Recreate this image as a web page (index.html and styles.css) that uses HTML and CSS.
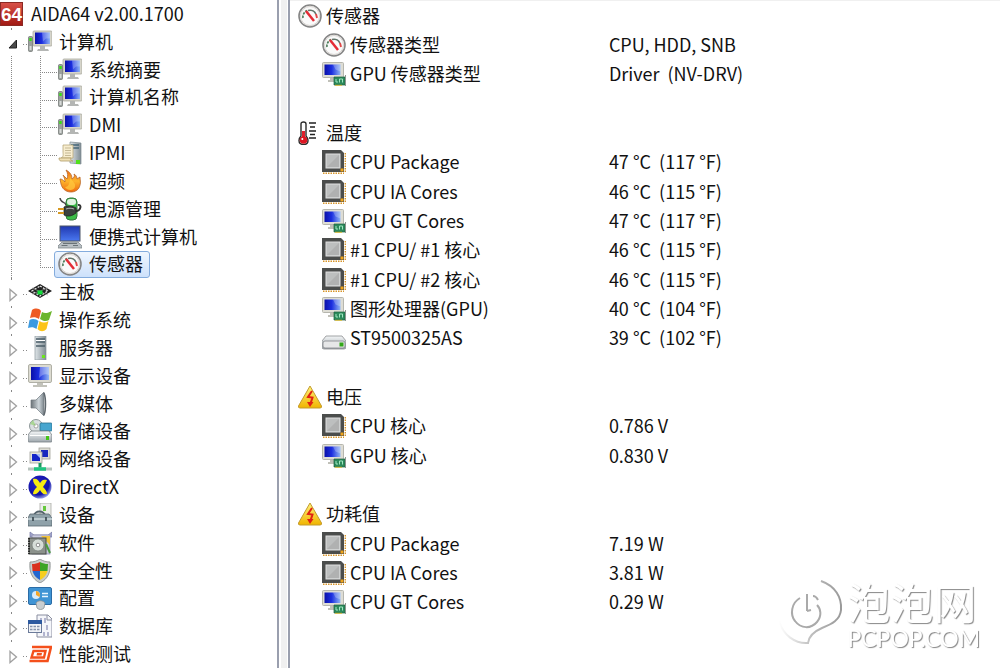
FILE: index.html
```html
<!DOCTYPE html>
<html lang="zh-CN">
<head>
    <meta charset="UTF-8">
    <meta name="viewport" content="width=device-width, initial-scale=1.0">
    <title>AIDA64</title>
    <link rel="stylesheet" href="styles.css">
</head>
<body>
    <svg class="sprite" aria-hidden="true">
        <defs>
            <linearGradient id="blue" x1="0" y1="0" x2="1" y2="0"><stop offset="0" stop-color="#0a10a8"/><stop offset=".45" stop-color="#1c2fe0"/><stop offset="1" stop-color="#8fb4f4"/></linearGradient>
            <linearGradient id="blue2" x1="0" y1="0" x2="0" y2="1"><stop offset="0" stop-color="#2038b0"/><stop offset="1" stop-color="#4a78f0"/></linearGradient>
            <linearGradient id="metal" x1="0" y1="0" x2="0" y2="1"><stop offset="0" stop-color="#f4f6f7"/><stop offset="1" stop-color="#9fa8ae"/></linearGradient>
            <linearGradient id="tower" x1="0" y1="0" x2="1" y2="0"><stop offset="0" stop-color="#dfe5e8"/><stop offset="1" stop-color="#7f8c93"/></linearGradient>
            <linearGradient id="fire" x1="0" y1="0" x2="0" y2="1"><stop offset="0" stop-color="#f26a10"/><stop offset=".5" stop-color="#fdb52c"/><stop offset="1" stop-color="#f06a10"/></linearGradient>
            <linearGradient id="gold" x1="0" y1="0" x2="0" y2="1"><stop offset="0" stop-color="#fff27a"/><stop offset="1" stop-color="#f0b400"/></linearGradient>
            <linearGradient id="red" x1="0" y1="0" x2="0" y2="1"><stop offset="0" stop-color="#d9534a"/><stop offset="1" stop-color="#a01812"/></linearGradient>
            <radialGradient id="orb" cx=".4" cy=".35" r=".7"><stop offset="0" stop-color="#2323c8"/><stop offset=".7" stop-color="#1414a8"/><stop offset="1" stop-color="#a8b4f0"/></radialGradient>
            <linearGradient id="cone" x1="0" y1="0" x2="1" y2="0"><stop offset="0" stop-color="#6b7378"/><stop offset=".6" stop-color="#cdd5da"/><stop offset="1" stop-color="#7c868c"/></linearGradient>
            <linearGradient id="fade" x1="0" y1="0" x2="1" y2="0"><stop offset="0" stop-color="#fff"/><stop offset=".55" stop-color="#bbb"/><stop offset="1" stop-color="#999"/></linearGradient>
        </defs>
        <symbol id="i-computer" viewBox="0 0 24 24">
            <rect x="5" y="1" width="19" height="15" rx="1" fill="#d6d5cb" stroke="#a9a99f" stroke-width=".8"/>
            <rect x="7" y="2.500" width="15" height="11.500" fill="url(#blue)"/>
            <path d="M14 2.500h8v6h-4l-3 3z" fill="#dfe9ff" opacity=".3"/>
            <path d="M12 16h5v3h3l1 2H9l1-2h2z" fill="#b4b6b4"/>
            <rect x=".5" y="6.500" width="4" height="15" rx="1" fill="#9ba09d" stroke="#6c706e" stroke-width=".7"/>
            <rect x="1.300" y="8" width="2.400" height="3" fill="#35e012"/>
            <rect x="1.500" y="16" width="2" height="4" fill="#d7dad8"/>
        </symbol>
        <symbol id="i-ipmi" viewBox="0 0 24 24">
            <path d="M12 1l11 1v21l-11-1z" fill="url(#tower)" stroke="#7d898f" stroke-width=".7"/>
            <path d="M13 4h8M13 7h8" stroke="#456577" stroke-width="1.500"/>
            <rect x="18" y="19" width="4" height="4" fill="#52e01c"/>
            <path d="M5 4h10v13H3c3-1 2-4 2-6z" fill="#f7edcf" stroke="#b9a878" stroke-width=".8"/>
            <path d="M1 17h12c-1 2 1 3 2 3H3c-1.500 0-2-1.500-2-3z" fill="#efe0b6" stroke="#b09c68" stroke-width=".8"/>
            <path d="M7 7h6M7 9.500h6M7 12h6M7 14.500h6" stroke="#b9ac88" stroke-width=".8"/>
        </symbol>
        <symbol id="i-fire" viewBox="0 0 24 24">
            <path d="M8 1c4 2 6 5 6 9 2-1 3-3 2-5 2 1 3 3 3 5l3-2c0 3 1 5 0 8-1 5-5 7-9 7-6 0-9-4-10-8l-1-5c2 0 3 1 5 3 0-3-1-5-2-7l4 4c1-3 1-6-1-9z" fill="url(#fire)" stroke="#b8662a" stroke-width=".8"/>
            <path d="M12 9c2 3 6 5 5 9-1 4-8 4-10 0 4 0 5-5 5-9z" fill="#ffc63c" opacity=".8"/>
        </symbol>
        <symbol id="i-power" viewBox="0 0 24 24">
            <rect x="8" y="1" width="11" height="22" rx="4" fill="#3bbd47" stroke="#37753e"/>
            <rect x="9" y="2" width="9" height="6" rx="3" fill="#dff3e0"/>
            <path d="M2 1c1 6 5 3 6 7" fill="none" stroke="#444" stroke-width="1.500"/>
            <path d="M18 14c5 0 6-7 2-6" fill="none" stroke="#333" stroke-width="2"/>
            <path d="M6 10c4-2 8-1 12 1v5c-4 3-8 4-12 2z" fill="#3c413e" stroke="#1f2220" stroke-width=".8"/>
            <path d="M8 12c3-1 5-1 8 0" fill="none" stroke="#b0b5b1"/>
            <path d="M0 12h6M0 16h6" stroke="#d79a22" stroke-width="1.800"/>
        </symbol>
        <symbol id="i-laptop" viewBox="0 0 24 24">
            <rect x="2" y="1" width="20" height="15" fill="url(#blue2)" stroke="#4d5668"/>
            <path d="M4 17h16l4 4v2H0v-2z" fill="#b9c0c4" stroke="#737b80" stroke-width=".7"/>
            <path d="M5 18.500h14M3.500 20.500h6M15 20.500h5" stroke="#6a7378"/>
        </symbol>
        <symbol id="i-gauge" viewBox="0 0 24 24">
            <circle cx="12" cy="12" r="11" fill="#fafafa" stroke="#858585" stroke-width="1.600"/>
            <circle cx="12" cy="12" r="9.500" fill="none" stroke="#d8d4d0"/>
            <path d="M5 14c-.5-3 1-6 4-7.500" fill="none" stroke="#4f7d5c" stroke-width="1.700" stroke-dasharray="2.500 1"/>
            <path d="M10 6.500c4-1 7 1 8 4" fill="none" stroke="#62756a" stroke-width="1.500"/>
            <path d="M18 10l1 4" stroke="#e04848" stroke-width="1.900"/>
            <path d="M8 7l8 10" stroke="#e42b35" stroke-width="2.500"/>
        </symbol>
        <symbol id="i-board" viewBox="0 0 24 24">
            <path d="M12 4l12 7-12 7L0 11z" fill="#222"/>
            <path d="M12 6l8 5-8 5-8-5z" fill="none" stroke="#ececec" stroke-width="1.200" stroke-dasharray="2 1.500"/>
            <path d="M4 8l16 7M20 8L4 14" stroke="#999" stroke-width=".7"/>
            <rect x="9.500" y="10.500" width="5" height="4" fill="#12e03a"/>
        </symbol>
        <symbol id="i-windows" viewBox="0 0 24 24">
            <path d="M4 2c3-2 7-2 9 1l-2 8c-3-2-6-2-9-1z" fill="#ee5a24"/>
            <path d="M14 4c3 2 6 1 10-1l-3 9c-3 2-6 1-9-1z" fill="#6cb52d"/>
            <path d="M1.500 12c3-2 7-1 9 1l-2 8c-3-2-5-2-8.500-1z" fill="#3b9ae0"/>
            <path d="M11.500 13c3 2 6 2 9 0l-2 8c-3 3-6 3-9 0z" fill="#fcc419"/>
        </symbol>
        <symbol id="i-server" viewBox="0 0 24 24">
            <path d="M7 0h11v24H7z" fill="url(#tower)" stroke="#8b969c" stroke-width=".7"/>
            <path d="M8 3h9M8 6h9M8 10h9" stroke="#4c5f69" stroke-width="1.300"/>
            <path d="M8 4.500h9" stroke="#fff"/>
            <rect x="14" y="19" width="3" height="3" fill="#6be81b"/>
        </symbol>
        <symbol id="i-display" viewBox="0 0 24 24">
            <rect x=".5" y=".5" width="23" height="18" rx="1.500" fill="#dcdbd1" stroke="#b0b0a6"/>
            <rect x="3" y="3" width="18" height="13" fill="url(#blue)"/>
            <path d="M12 3h9v8c-4-2-7 0-10 3z" fill="#fff" opacity=".3"/>
            <path d="M9 19h6v2h4v2H5v-2h4z" fill="#c2c2ba"/>
        </symbol>
        <symbol id="i-speaker" viewBox="0 0 24 24">
            <path d="M3 8h5l8-8v24l-8-8H3z" fill="url(#cone)" stroke="#707a80" stroke-width=".7"/>
            <path d="M16 1c2 5 2 17 0 22" fill="none" stroke="#5f686e" stroke-width="1.500"/>
        </symbol>
        <symbol id="i-storage" viewBox="0 0 24 24">
            <circle cx="8" cy="7" r="6.500" fill="#d9dfe0" stroke="#8e9799"/>
            <circle cx="8" cy="7" r="2" fill="#fff" stroke="#888" stroke-width=".7"/>
            <path d="M2 5l6 2-3-6z" fill="#88d060" opacity=".6"/>
            <rect x="12" y="4" width="12" height="8" rx="1" fill="#46a5cf" stroke="#28718f" stroke-width=".8"/>
            <path d="M3 12h18l3 4v6q0 1-1 1H1q-1 0-1-1v-6z" fill="url(#metal)" stroke="#777f84" stroke-width=".8"/>
            <path d="M2 16.500h20" stroke="#fff"/>
            <rect x="18" y="17" width="3" height="4" fill="#46c417"/>
        </symbol>
        <symbol id="i-network" viewBox="0 0 24 24">
            <rect x="11" y="1" width="11" height="11" fill="#dcdcd4" stroke="#a2a29a" stroke-width=".8"/>
            <rect x="13" y="3" width="7" height="7" fill="#1828c0"/>
            <rect x="2" y="5" width="12" height="11" fill="#e4e4dc" stroke="#a2a29a" stroke-width=".8"/>
            <rect x="4" y="7" width="8" height="7" fill="#1424c8"/>
            <path d="M8 7h4v4z" fill="#a8bcf6"/>
            <path d="M12 16v6" stroke="#1a9a60" stroke-width="3"/>
            <path d="M0 22h24" stroke="#b9c4bf" stroke-width="3"/>
            <path d="M6 22h12" stroke="#1fc580" stroke-width="3.500"/>
        </symbol>
        <symbol id="i-directx" viewBox="0 0 24 24">
            <circle cx="12" cy="12" r="11.500" fill="url(#orb)"/>
            <path d="M5 4c4-1 5 1 7 4 2-3 3-4 7-3-1 3-3 5-4 7 2 2 4 4 4 7-4 1-5-1-7-4-2 3-4 5-7 4 0-3 2-5 4-7-2-2-4-4-4-8z" fill="#f7ea10"/>
        </symbol>
        <symbol id="i-device" viewBox="0 0 24 24">
            <path d="M12 0h11v13H12z" fill="#eceeea" stroke="#a9aaa5" stroke-width=".8"/>
            <rect x="15" y="3" width="3" height="5" fill="#66c83c"/>
            <path d="M6 13c0-6 11-6 11 0" fill="none" stroke="#52626b" stroke-width="1.800"/>
            <path d="M2 11h19l3 4v8H0v-8z" fill="#8fa1a9" stroke="#56656d" stroke-width=".8"/>
            <path d="M0 16h24" stroke="#d5e0e4" stroke-width="1.300"/>
            <path d="M5 14v4M18 14v4" stroke="#435159" stroke-width="1.800"/>
        </symbol>
        <symbol id="i-software" viewBox="0 0 24 24">
            <path d="M2 1l4 3h14l4-3v5H2z" fill="#a4a8d0" stroke="#7477a0" stroke-width=".7"/>
            <rect x="4" y="4" width="18" height="19" fill="#cacbe0" stroke="#8e90b0" stroke-width=".8"/>
            <path d="M13 5h9v9z" fill="#f2c43b"/>
            <rect x="1" y="7" width="17" height="16" fill="#8c928c" stroke="#494d49"/>
            <circle cx="10" cy="14" r="6" fill="#d6ddd8" stroke="#767d78" stroke-width=".7"/>
            <circle cx="10" cy="14" r="1.800" fill="#fff" stroke="#666" stroke-width=".7"/>
            <path d="M1 7v16" stroke="#222" stroke-width="1.800" stroke-dasharray="1.500 1"/>
            <path d="M18 13l4 9" stroke="#4b9c3d" stroke-width="2"/>
        </symbol>
        <symbol id="i-shield" viewBox="0 0 24 24">
            <path d="M12 0c3 2 6 3 10 3 1 10-2 17-10 21C4 20 1 13 2 3c4 0 7-1 10-3z" fill="#c8cccb" stroke="#858a89" stroke-width=".8"/>
            <path d="M12 3v9H4.500L4 5c3 0 5-.6 8-2z" fill="#d9301e"/>
            <path d="M12 3c3 1.400 5 2 8 2l-.5 7H12z" fill="#3ba426"/>
            <path d="M4.500 12H12v9c-4-2-6.500-5-7.500-9z" fill="#2367d0"/>
            <path d="M12 12h7.500c-1 4-3.500 7-7.500 9z" fill="#f6ce1e"/>
        </symbol>
        <symbol id="i-config" viewBox="0 0 24 24">
            <rect x=".5" y="1.500" width="23" height="17" rx="1.500" fill="#3f94d4" stroke="#2b6ca6"/>
            <circle cx="8" cy="9" r="4" fill="#d8ecfa"/>
            <path d="M8 9V5a4 4 0 0 1 3.500 6z" fill="#f4a627"/>
            <path d="M14 7.500h6M14 10.500h6" stroke="#e8f5ff" stroke-width="1.600"/>
            <path d="M8 17c2-3 7-3 9 0l-1 5c-2 2-5 2-7 0z" fill="#c9ced0" stroke="#8a9296" stroke-width=".8"/>
        </symbol>
        <symbol id="i-database" viewBox="0 0 24 24">
            <path d="M9 1h11l4 4v18H9z" fill="#f5f6fa" stroke="#8a8ea0"/>
            <path d="M19 1v5h5" fill="none" stroke="#8a8ea0"/>
            <path d="M13 4v5M17 4v5M19 11v5M16 18v4M20 18v4" stroke="#8e92b8" stroke-width="1.300"/>
            <rect x=".5" y="6.500" width="13" height="12" fill="#f1f3f7" stroke="#6b7a99"/>
            <rect x="0" y="6" width="14" height="4" fill="#2d5aa0"/>
            <path d="M2 12.500h10M2 15.500h10" stroke="#8794ac" stroke-width="1.600" stroke-dasharray="2.500 1"/>
        </symbol>
        <symbol id="i-bench" viewBox="0 0 24 24">
            <path d="M4 5h19l-3.500 14H1.500" fill="none" stroke="#f4501c" stroke-width="2.600"/>
            <path d="M3.500 8.500h13.500l-2 8H1.500z" fill="#fff"/>
            <path d="M5.500 9h12l-1.500 6.500H3.500z" fill="none" stroke="#f4501c" stroke-width="2.400"/>
            <path d="M9 11h5l-.5 2.500h-5z" fill="#f4501c"/>
        </symbol>
        <symbol id="i-gpu" viewBox="0 0 24 24">
            <rect x=".5" y=".5" width="21" height="15" rx="1" fill="#deddd5" stroke="#b6b6ae"/>
            <rect x="2.500" y="2.500" width="16" height="10.500" fill="url(#blue)"/>
            <path d="M11 2.500h7.500v7l-5-2z" fill="#fff" opacity=".25"/>
            <path d="M8 16h5v4H6v-2h2z" fill="#c0c0b8"/>
            <path d="M12 15h11v8H12z" fill="#2c8a5c" stroke="#1d5e3e" stroke-width=".7"/>
            <path d="M14 17v3h2M17.500 20.500v-3.500h3v3.500" fill="none" stroke="#9fe6c0"/>
            <path d="M13 23.300h7" stroke="#dcbc3c"/>
            <path d="M23.500 13v11" stroke="#8d9590"/>
        </symbol>
        <symbol id="i-chip" viewBox="0 0 24 24">
            <path d="M1 23.300h21M23.300 3v20" stroke="#d8962c" stroke-width="1.400" stroke-dasharray="1.500 1"/>
            <path d="M0 0h19l3 3v19H0z" fill="#4b4d4c"/>
            <rect x="4" y="4" width="14" height="14" fill="#bdbfbf" stroke="#dfe0e0"/>
            <path d="M5 17L17 5v12z" fill="#a7a9a9" opacity=".6"/>
            <rect x="18.500" y="18.500" width="3" height="3" fill="#f0a418"/>
        </symbol>
        <symbol id="i-disk" viewBox="0 0 24 24">
            <path d="M4 10h16l4 5v6q0 2-2 2H2q-2 0-2-2v-6z" fill="url(#metal)" stroke="#8b8e90" stroke-width=".8"/>
            <rect x="1" y="15" width="22" height="7" rx="2" fill="#e6e7e8" stroke="#83878a" stroke-width=".8"/>
            <rect x="17.500" y="16.500" width="4" height="4" fill="#35a81b"/>
        </symbol>
        <symbol id="i-thermo" viewBox="0 0 24 24">
            <path d="M3 3q0-2 2.500-2T8 3v12q2 2 2 4.500Q10 23.500 5.500 23.500T1 19.500Q1 17 3 15z" fill="#fff" stroke="#2b2b2b" stroke-width="1.400"/>
            <path d="M5.500 10v7" stroke="#e0202c" stroke-width="3"/>
            <circle cx="5.500" cy="19" r="3.800" fill="#dd1622"/>
            <circle cx="4.300" cy="18" r="1" fill="#fff"/>
            <path d="M11 2h7M12 6h5M11 10h7M12 13.500h5M11 17h7" stroke="#222" stroke-width="1.500"/>
        </symbol>
        <symbol id="i-warn" viewBox="0 0 24 24">
            <path d="M12 1L23.500 21q.5 2-1.500 2H2Q0 23 .5 21z" fill="url(#gold)" stroke="#c39b2e"/>
            <path d="M14 6l-4 6 4.500 .5-2 6" fill="none" stroke="#e02212" stroke-width="2"/>
            <path d="M9 17h6.500L12 22z" fill="#e02212"/>
        </symbol>
        <symbol id="i-closed" viewBox="0 0 10 14">
            <path d="M2 1.500v11L8.500 7z" fill="#fff" stroke="#a0a0a0" stroke-width="1.300"/>
        </symbol>
        <symbol id="i-open" viewBox="0 0 10 14">
            <path d="M8.500 3v8H1z" fill="#4a4a4a" stroke="#222"/>
        </symbol>
    </svg>

    <div class="window">
        <ul class="tree">
            <li class="root">
                <svg class="icon" viewBox="0 0 24 24"><rect width="23" height="24" fill="url(#red)"/><rect x=".5" y=".5" width="22" height="23" fill="none" stroke="#8c2a24"/><text class="logo-text" x="1" y="19">64</text></svg>
                <span class="label">AIDA64 v2.00.1700</span>
            </li>
            <li class="branch"><button class="toggle" aria-label="折叠"><svg><use href="#i-open"/></svg></button><svg class="icon"><use href="#i-computer"/></svg><span class="label">计算机</span></li>
            <li class="leaf"><a class="item" href="#"><svg class="icon"><use href="#i-computer"/></svg><span class="label">系统摘要</span></a></li>
            <li class="leaf"><a class="item" href="#"><svg class="icon"><use href="#i-computer"/></svg><span class="label">计算机名称</span></a></li>
            <li class="leaf"><a class="item" href="#"><svg class="icon"><use href="#i-computer"/></svg><span class="label">DMI</span></a></li>
            <li class="leaf"><a class="item" href="#"><svg class="icon"><use href="#i-ipmi"/></svg><span class="label">IPMI</span></a></li>
            <li class="leaf"><a class="item" href="#"><svg class="icon"><use href="#i-fire"/></svg><span class="label">超频</span></a></li>
            <li class="leaf"><a class="item" href="#"><svg class="icon"><use href="#i-power"/></svg><span class="label">电源管理</span></a></li>
            <li class="leaf"><a class="item" href="#"><svg class="icon"><use href="#i-laptop"/></svg><span class="label">便携式计算机</span></a></li>
            <li class="leaf last"><a class="item selected" href="#"><svg class="icon"><use href="#i-gauge"/></svg><span class="label">传感器</span></a></li>
            <li class="branch"><button class="toggle" aria-label="展开"><svg><use href="#i-closed"/></svg></button><svg class="icon"><use href="#i-board"/></svg><span class="label">主板</span></li>
            <li class="branch"><button class="toggle" aria-label="展开"><svg><use href="#i-closed"/></svg></button><svg class="icon"><use href="#i-windows"/></svg><span class="label">操作系统</span></li>
            <li class="branch"><button class="toggle" aria-label="展开"><svg><use href="#i-closed"/></svg></button><svg class="icon"><use href="#i-server"/></svg><span class="label">服务器</span></li>
            <li class="branch"><button class="toggle" aria-label="展开"><svg><use href="#i-closed"/></svg></button><svg class="icon"><use href="#i-display"/></svg><span class="label">显示设备</span></li>
            <li class="branch"><button class="toggle" aria-label="展开"><svg><use href="#i-closed"/></svg></button><svg class="icon"><use href="#i-speaker"/></svg><span class="label">多媒体</span></li>
            <li class="branch"><button class="toggle" aria-label="展开"><svg><use href="#i-closed"/></svg></button><svg class="icon"><use href="#i-storage"/></svg><span class="label">存储设备</span></li>
            <li class="branch"><button class="toggle" aria-label="展开"><svg><use href="#i-closed"/></svg></button><svg class="icon"><use href="#i-network"/></svg><span class="label">网络设备</span></li>
            <li class="branch"><button class="toggle" aria-label="展开"><svg><use href="#i-closed"/></svg></button><svg class="icon"><use href="#i-directx"/></svg><span class="label">DirectX</span></li>
            <li class="branch"><button class="toggle" aria-label="展开"><svg><use href="#i-closed"/></svg></button><svg class="icon"><use href="#i-device"/></svg><span class="label">设备</span></li>
            <li class="branch"><button class="toggle" aria-label="展开"><svg><use href="#i-closed"/></svg></button><svg class="icon"><use href="#i-software"/></svg><span class="label">软件</span></li>
            <li class="branch"><button class="toggle" aria-label="展开"><svg><use href="#i-closed"/></svg></button><svg class="icon"><use href="#i-shield"/></svg><span class="label">安全性</span></li>
            <li class="branch"><button class="toggle" aria-label="展开"><svg><use href="#i-closed"/></svg></button><svg class="icon"><use href="#i-config"/></svg><span class="label">配置</span></li>
            <li class="branch"><button class="toggle" aria-label="展开"><svg><use href="#i-closed"/></svg></button><svg class="icon"><use href="#i-database"/></svg><span class="label">数据库</span></li>
            <li class="branch"><button class="toggle" aria-label="展开"><svg><use href="#i-closed"/></svg></button><svg class="icon"><use href="#i-bench"/></svg><span class="label">性能测试</span></li>
        </ul>

        <div class="splitter"></div>

        <main class="details">
            <table class="readings">
                <colgroup><col class="col-name"><col></colgroup>
                <tr class="group"><th colspan="2"><span class="name"><svg class="icon"><use href="#i-gauge"/></svg>传感器</span></th></tr>
                <tr><th><span class="name"><svg class="icon"><use href="#i-gauge"/></svg>传感器类型</span></th><td>CPU, HDD, SNB</td></tr>
                <tr><th><span class="name"><svg class="icon"><use href="#i-gpu"/></svg>GPU 传感器类型</span></th><td>Driver  (NV-DRV)</td></tr>
                <tr><td colspan="2"></td></tr>
                <tr class="group"><th colspan="2"><span class="name"><svg class="icon"><use href="#i-thermo"/></svg>温度</span></th></tr>
                <tr><th><span class="name"><svg class="icon"><use href="#i-chip"/></svg>CPU Package</span></th><td>47 °C  (117 °F)</td></tr>
                <tr><th><span class="name"><svg class="icon"><use href="#i-chip"/></svg>CPU IA Cores</span></th><td>46 °C  (115 °F)</td></tr>
                <tr><th><span class="name"><svg class="icon"><use href="#i-gpu"/></svg>CPU GT Cores</span></th><td>47 °C  (117 °F)</td></tr>
                <tr><th><span class="name"><svg class="icon"><use href="#i-chip"/></svg>#1 CPU/ #1 核心</span></th><td>46 °C  (115 °F)</td></tr>
                <tr><th><span class="name"><svg class="icon"><use href="#i-chip"/></svg>#1 CPU/ #2 核心</span></th><td>46 °C  (115 °F)</td></tr>
                <tr><th><span class="name"><svg class="icon"><use href="#i-gpu"/></svg>图形处理器(GPU)</span></th><td>40 °C  (104 °F)</td></tr>
                <tr><th><span class="name"><svg class="icon"><use href="#i-disk"/></svg>ST9500325AS</span></th><td>39 °C  (102 °F)</td></tr>
                <tr><td colspan="2"></td></tr>
                <tr class="group"><th colspan="2"><span class="name"><svg class="icon"><use href="#i-warn"/></svg>电压</span></th></tr>
                <tr><th><span class="name"><svg class="icon"><use href="#i-chip"/></svg>CPU 核心</span></th><td>0.786 V</td></tr>
                <tr><th><span class="name"><svg class="icon"><use href="#i-gpu"/></svg>GPU 核心</span></th><td>0.830 V</td></tr>
                <tr><td colspan="2"></td></tr>
                <tr class="group"><th colspan="2"><span class="name"><svg class="icon"><use href="#i-warn"/></svg>功耗值</span></th></tr>
                <tr><th><span class="name"><svg class="icon"><use href="#i-chip"/></svg>CPU Package</span></th><td>7.19 W</td></tr>
                <tr><th><span class="name"><svg class="icon"><use href="#i-chip"/></svg>CPU IA Cores</span></th><td>3.81 W</td></tr>
                <tr><th><span class="name"><svg class="icon"><use href="#i-gpu"/></svg>CPU GT Cores</span></th><td>0.29 W</td></tr>
            </table>
        </main>
    </div>

    <div class="watermark">
        <svg class="mark" viewBox="0 0 70 72" fill="none">
            <path d="M44 3c14 5 21 16 20 29-1 10-9 14-19 18-7 3-13 7-14 15C18 66 6 57 2 43" stroke="url(#fade)"/>
            <path d="M23 20c-9 5-10 17-5 23 6 8 16 8 22 1 5-6 4-13 0-17M36 18c2 0 4 2 5 4M30 33V16M30 33l4-1" stroke="#aaa"/>
        </svg>
        <div class="brand">
            <span class="brand-name">泡泡网</span>
            <span class="brand-site">PCPOP.COM</span>
        </div>
    </div>
</body>
</html>
```
FILE: styles.css
```css
* {
    box-sizing: border-box;
}

body {
    margin: 0;
    background-color: #fff;
    color: #111;
    font-family: "Noto Sans CJK SC", sans-serif;
    font-size: 18px;
    line-height: 22px;
}

.sprite {
    position: absolute;
    width: 0;
    height: 0;
}

.window {
    display: flex;
    min-height: 100vh;
}

.icon {
    flex: none;
    width: 24px;
    height: 24px;
}

/* Navigation tree */
.tree {
    flex: 0 0 277px;
    display: grid;
    grid-auto-rows: minmax(26px, 1fr);
    margin: 0;
    padding: 0;
    list-style: none;
    white-space: nowrap;
}

.tree li {
    display: flex;
    align-items: center;
}

.label {
    padding: 0 0 2px 7px;
}

.logo-text {
    fill: #fff;
    font: bold 19px "Liberation Sans", sans-serif;
}

.branch {
    background:
        linear-gradient(#888, #888) 11px 0 / 1px 2px no-repeat,
        repeating-linear-gradient(90deg, #888 0 1px, transparent 1px 3px) 23px 16px / 5px 1px no-repeat;
}

.toggle {
    width: 10px;
    height: 14px;
    margin: 5px 10px 0 8px;
    padding: 0;
    border: none;
    background: none;
    cursor: pointer;
}

.toggle svg {
    display: block;
    width: 10px;
    height: 14px;
}

/* dotted guide lines: outer trunk, inner trunk, twig */
.leaf {
    padding-left: 54px;
    background:
        repeating-linear-gradient(#888 0 1px, transparent 1px 2px) 11px 0 / 1px 100% no-repeat,
        repeating-linear-gradient(#888 0 1px, transparent 1px 2px) 40px 0 / 1px 100% no-repeat,
        repeating-linear-gradient(90deg, #888 0 1px, transparent 1px 2px) 42px 16px / 15px 1px no-repeat;
}

.leaf.last {
    background-size: 1px 100%, 1px 17px, 15px 1px;
}

.item {
    display: flex;
    align-items: center;
    height: 100%;
    padding: 0 6px 0 3px;
    border: 1px solid transparent;
    border-radius: 3px;
    color: inherit;
    text-decoration: none;
}

.item.selected {
    border-color: #84acdd;
    background: linear-gradient(#f1f7fe, #cde1fb);
}

.splitter {
    flex: 0 0 13px;
    border: solid #9a9fae;
    border-width: 0 2px;
    background: linear-gradient(90deg, #fff 2px, #f0f0f0 2px, #f0f0f0 8px, #fff 8px);
    cursor: col-resize;
}

/* Sensor list */
.details {
    flex: 1;
    padding: 0 0 51px 8px;
    border-top: 1px solid #f0f0f0;
}

.readings {
    width: 100%;
    height: 100%;
    table-layout: fixed;
    border-collapse: collapse;
}

.col-name {
    width: 44%;
}

.readings tr {
    height: 28px;
}

.readings th,
.readings td {
    padding: 0 0 2px;
    font-weight: normal;
    text-align: left;
    white-space: pre;
}

.readings th {
    padding-left: 24px;
}

.readings .group th {
    padding-left: 0;
}

.readings td {
    padding-left: 2px;
}

.name {
    display: flex;
    align-items: center;
    gap: 4px;
}

.name .icon {
    margin-top: 2px;
}

/* Site watermark */
.watermark {
    position: fixed;
    right: 20px;
    bottom: 18px;
    display: flex;
    align-items: center;
    color: #fff;
}

.mark {
    width: 70px;
    height: 72px;
    stroke-width: 2;
}

.brand {
    display: flex;
    flex-direction: column;
    gap: 2px;
    text-shadow: 1px 1px 1px #888;
}

.brand-name {
    font-size: 43px;
    line-height: 46px;
}

.brand-site {
    font-family: Lato, sans-serif;
    font-size: 23px;
    line-height: 24px;
}
```
